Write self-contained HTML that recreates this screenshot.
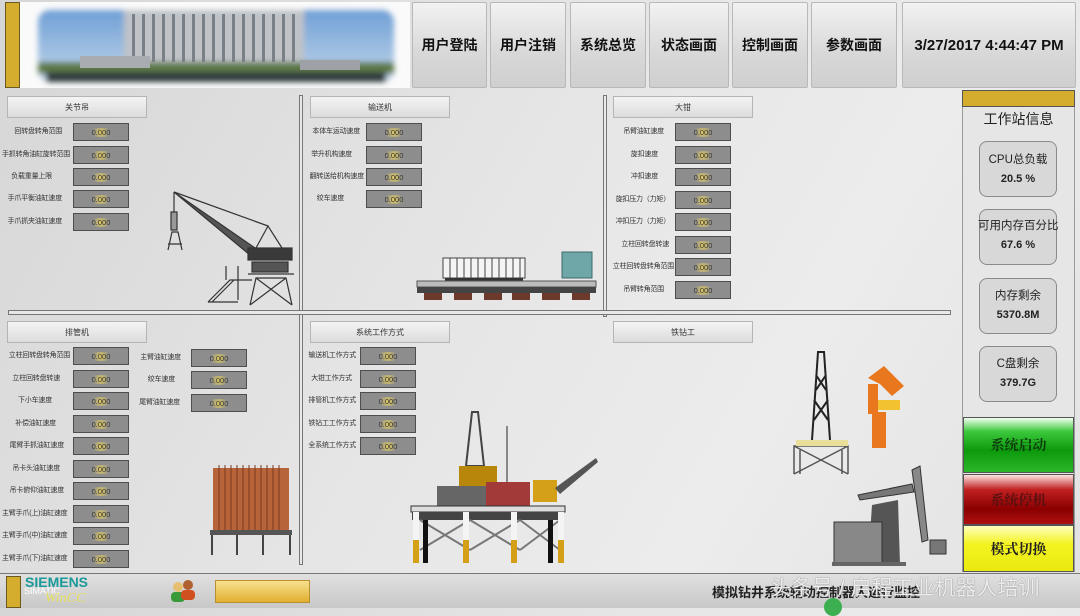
<!DOCTYPE html>
<html><head><meta charset="utf-8">
<style>
*{margin:0;padding:0;box-sizing:border-box}
body{width:1080px;height:608px;overflow:hidden;position:relative;background:linear-gradient(120deg,#d6d6d6 0%,#e6e6e6 45%,#ececec 70%,#e2e2e2 100%);font-family:"Liberation Sans","Noto Sans CJK SC",sans-serif;color:#222}
.a{position:absolute}
.nav{position:absolute;top:2px;height:86px;background:linear-gradient(#f2f2f2,#d8d8d8 60%,#cfcfcf);border:1px solid #b8b8b8;border-radius:2px;font-size:14px;font-weight:bold;display:flex;align-items:center;justify-content:center;color:#111;font-family:"Liberation Sans","Noto Sans CJK SC",sans-serif}
.tb{position:absolute;height:22px;width:140px;background:linear-gradient(#f4f4f4,#dcdcdc);border:1px solid #b5b5b5;font-size:8px;display:flex;align-items:center;justify-content:center;color:#333}
.lb{position:absolute;font-size:7px;color:#333;text-align:right;white-space:nowrap;line-height:18px;height:18px;letter-spacing:-0.2px}
.bx{position:absolute;width:56px;height:18px;background:#8d8d8d;border:1px solid #4e4e4e;font-size:7.5px;color:#333;display:flex;align-items:center;justify-content:center}
.bx i{font-style:normal;background:radial-gradient(circle,#e6cf60 0%,rgba(230,207,96,0) 65%);padding:0 3px}
.card{position:absolute;left:979px;width:78px;height:56px;background:#d8d8d8;border:1px solid #8a8a8a;border-radius:8px;text-align:center;font-size:11.5px;color:#222}
.card b{display:block;font-size:11px;margin-top:6px}
.btn{position:absolute;left:963px;width:111px;font-size:14px;font-weight:bold;display:flex;align-items:center;justify-content:center;font-family:"Noto Serif CJK SC","Liberation Serif",serif;border:1px solid #555}
</style></head><body>

<div class="a" style="left:5px;top:2px;width:15px;height:86px;background:#d4ac2e;border:1px solid #6a5a20"></div>
<div class="a" style="left:20px;top:2px;width:390px;height:86px;background:#fafafa;overflow:hidden">
 <svg width="390" height="86">
  <defs><linearGradient id="sky" x1="0" y1="0" x2="0" y2="1"><stop offset="0" stop-color="#6f9fd6"/><stop offset="1" stop-color="#c3d7ea"/></linearGradient>
  <filter id="bl"><feGaussianBlur stdDeviation="3"/></filter></defs>
  <g filter="url(#bl)">
  <rect x="18" y="8" width="356" height="72" rx="12" fill="url(#sky)"/>
  <rect x="104" y="8" width="180" height="58" fill="#bfc3c8"/>
  <rect x="18" y="60" width="356" height="12" fill="#5f7a48"/>
  <rect x="26" y="70" width="340" height="10" fill="#2f3a3c"/>
  </g>
  <g fill="#7a8088"><rect x="112" y="12" width="3" height="48"/><rect x="122" y="12" width="3" height="48"/><rect x="132" y="12" width="3" height="48"/><rect x="142" y="12" width="3" height="48"/><rect x="152" y="12" width="3" height="48"/><rect x="162" y="12" width="3" height="48"/><rect x="172" y="12" width="3" height="48"/><rect x="182" y="12" width="3" height="48"/><rect x="192" y="12" width="3" height="48"/><rect x="202" y="12" width="3" height="48"/><rect x="212" y="12" width="3" height="48"/><rect x="222" y="12" width="3" height="48"/><rect x="232" y="12" width="3" height="48"/><rect x="242" y="12" width="3" height="48"/><rect x="252" y="12" width="3" height="48"/><rect x="262" y="12" width="3" height="48"/><rect x="272" y="12" width="3" height="48"/></g>
  <rect x="60" y="54" width="70" height="12" fill="#a9acb0"/>
  <rect x="280" y="58" width="60" height="10" fill="#9ea2a6"/>
 </svg>
</div>
<div class="nav" style="left:412px;width:75px">用户登陆</div>
<div class="nav" style="left:490px;width:76px">用户注销</div>
<div class="nav" style="left:570px;width:76px">系统总览</div>
<div class="nav" style="left:649px;width:80px">状态画面</div>
<div class="nav" style="left:732px;width:76px">控制画面</div>
<div class="nav" style="left:811px;width:86px">参数画面</div>
<div class="nav" style="left:902px;width:174px;font-size:15px">3/27/2017 4:44:47 PM</div>

<div class="a" style="left:299px;top:95px;width:4px;height:470px;background:#e8e8e8;border:1px solid #777"></div>
<div class="a" style="left:603px;top:95px;width:4px;height:222px;background:#e8e8e8;border:1px solid #777"></div>
<div class="a" style="left:8px;top:310px;width:943px;height:5px;background:#e8e8e8;border:1px solid #777"></div>

<div class="tb" style="left:7px;top:96px">关节吊</div>
<div class="tb" style="left:310px;top:96px">输送机</div>
<div class="tb" style="left:613px;top:96px">大钳</div>
<div class="tb" style="left:7px;top:321px">排管机</div>
<div class="tb" style="left:310px;top:321px">系统工作方式</div>
<div class="tb" style="left:613px;top:321px">铁钻工</div>

<div class="lb" style="left:2px;width:60px;top:123px">回转盘转角范围</div><div class="bx" style="left:73px;top:123px"><i>0.000</i></div>
<div class="lb" style="left:2px;width:70px;top:146px;text-align:left;overflow:hidden">手抓转角油缸旋转范围</div><div class="bx" style="left:73px;top:146px"><i>0.000</i></div>
<div class="lb" style="left:2px;width:50px;top:168px">负载重量上限</div><div class="bx" style="left:73px;top:168px"><i>0.000</i></div>
<div class="lb" style="left:2px;width:60px;top:190px">手爪平衡油缸速度</div><div class="bx" style="left:73px;top:190px"><i>0.000</i></div>
<div class="lb" style="left:2px;width:60px;top:213px">手爪抓夹油缸速度</div><div class="bx" style="left:73px;top:213px"><i>0.000</i></div>

<div class="lb" style="left:306px;width:54px;top:123px">本体车运动速度</div><div class="bx" style="left:366px;top:123px"><i>0.000</i></div>
<div class="lb" style="left:306px;width:46px;top:146px">举升机构速度</div><div class="bx" style="left:366px;top:146px"><i>0.000</i></div>
<div class="lb" style="left:306px;width:58px;top:168px">翻转送给机构速度</div><div class="bx" style="left:366px;top:168px"><i>0.000</i></div>
<div class="lb" style="left:306px;width:38px;top:190px">绞车速度</div><div class="bx" style="left:366px;top:190px"><i>0.000</i></div>

<div class="lb" style="left:612px;width:52px;top:123px">吊臂油缸速度</div><div class="bx" style="left:675px;top:123px"><i>0.000</i></div>
<div class="lb" style="left:612px;width:46px;top:146px">旋扣速度</div><div class="bx" style="left:675px;top:146px"><i>0.000</i></div>
<div class="lb" style="left:612px;width:46px;top:168px">冲扣速度</div><div class="bx" style="left:675px;top:168px"><i>0.000</i></div>
<div class="lb" style="left:612px;width:58px;top:191px">旋扣压力（力矩）</div><div class="bx" style="left:675px;top:191px"><i>0.000</i></div>
<div class="lb" style="left:612px;width:58px;top:213px">冲扣压力（力矩）</div><div class="bx" style="left:675px;top:213px"><i>0.000</i></div>
<div class="lb" style="left:612px;width:57px;top:236px">立柱回转盘转速</div><div class="bx" style="left:675px;top:236px"><i>0.000</i></div>
<div class="lb" style="left:612px;width:62px;top:258px">立柱回转盘转角范围</div><div class="bx" style="left:675px;top:258px"><i>0.000</i></div>
<div class="lb" style="left:612px;width:52px;top:281px">吊臂转角范围</div><div class="bx" style="left:675px;top:281px"><i>0.000</i></div>

<div class="lb" style="left:2px;width:68px;top:347px">立柱回转盘转角范围</div><div class="bx" style="left:73px;top:347px"><i>0.000</i></div>
<div class="lb" style="left:2px;width:58px;top:370px">立柱回转盘转速</div><div class="bx" style="left:73px;top:370px"><i>0.000</i></div>
<div class="lb" style="left:2px;width:50px;top:392px">下小车速度</div><div class="bx" style="left:73px;top:392px"><i>0.000</i></div>
<div class="lb" style="left:2px;width:54px;top:415px">补偿油缸速度</div><div class="bx" style="left:73px;top:415px"><i>0.000</i></div>
<div class="lb" style="left:2px;width:62px;top:437px">尾臂手抓油缸速度</div><div class="bx" style="left:73px;top:437px"><i>0.000</i></div>
<div class="lb" style="left:2px;width:58px;top:460px">吊卡头油缸速度</div><div class="bx" style="left:73px;top:460px"><i>0.000</i></div>
<div class="lb" style="left:2px;width:62px;top:482px">吊卡俯仰油缸速度</div><div class="bx" style="left:73px;top:482px"><i>0.000</i></div>
<div class="lb" style="left:2px;width:71px;top:505px;text-align:left;overflow:hidden">主臂手爪(上)油缸速度</div><div class="bx" style="left:73px;top:505px"><i>0.000</i></div>
<div class="lb" style="left:2px;width:71px;top:527px;text-align:left;overflow:hidden">主臂手爪(中)油缸速度</div><div class="bx" style="left:73px;top:527px"><i>0.000</i></div>
<div class="lb" style="left:2px;width:71px;top:550px;text-align:left;overflow:hidden">主臂手爪(下)油缸速度</div><div class="bx" style="left:73px;top:550px"><i>0.000</i></div>
<div class="lb" style="left:135px;width:46px;top:349px">主臂油缸速度</div><div class="bx" style="left:191px;top:349px"><i>0.000</i></div>
<div class="lb" style="left:135px;width:40px;top:371px">绞车速度</div><div class="bx" style="left:191px;top:371px"><i>0.000</i></div>
<div class="lb" style="left:135px;width:45px;top:394px">尾臂油缸速度</div><div class="bx" style="left:191px;top:394px"><i>0.000</i></div>

<div class="lb" style="left:306px;width:50px;top:347px">输送机工作方式</div><div class="bx" style="left:360px;top:347px"><i>0.000</i></div>
<div class="lb" style="left:306px;width:46px;top:370px">大钳工作方式</div><div class="bx" style="left:360px;top:370px"><i>0.000</i></div>
<div class="lb" style="left:306px;width:50px;top:392px">排管机工作方式</div><div class="bx" style="left:360px;top:392px"><i>0.000</i></div>
<div class="lb" style="left:306px;width:50px;top:415px">铁钻工工作方式</div><div class="bx" style="left:360px;top:415px"><i>0.000</i></div>
<div class="lb" style="left:306px;width:50px;top:437px">全系统工作方式</div><div class="bx" style="left:360px;top:437px"><i>0.000</i></div>

<svg class="a" style="left:0;top:0" width="960" height="572">
 <g stroke="#333" fill="none" stroke-width="1.2">
  <line x1="174" y1="192" x2="268" y2="226"/>
  <path d="M174 192 L250 255 L258 250 Z" fill="#555"/>
  <line x1="174" y1="192" x2="174" y2="212"/>
  <rect x="171" y="212" width="6" height="18" fill="#999"/>
  <path d="M168 250 L172 232 L178 232 L182 250 M168 244 H182"/>
  <path d="M256 248 L268 226 L282 248"/>
  <rect x="248" y="248" width="44" height="12" fill="#3a3a3a"/>
  <rect x="252" y="262" width="36" height="10" fill="#555"/>
  <path d="M250 305 L256 278 H286 L292 305 M256 278 L292 305 M286 278 L250 305 M248 274 H294"/>
  <path d="M208 302 L230 280 H252 M212 302 L234 280 M208 302 H238 M226 266 V280 M238 266 V300"/>
 </g>
 <g>
  <rect x="443" y="258" width="82" height="20" fill="#f4f4f4" stroke="#444"/>
  <g stroke="#444" stroke-width="1"><line x1="450" y1="258" x2="450" y2="278"/><line x1="457" y1="258" x2="457" y2="278"/><line x1="464" y1="258" x2="464" y2="278"/><line x1="471" y1="258" x2="471" y2="278"/><line x1="478" y1="258" x2="478" y2="278"/><line x1="485" y1="258" x2="485" y2="278"/><line x1="492" y1="258" x2="492" y2="278"/><line x1="499" y1="258" x2="499" y2="278"/><line x1="506" y1="258" x2="506" y2="278"/><line x1="513" y1="258" x2="513" y2="278"/><line x1="520" y1="258" x2="520" y2="278"/></g>
  <rect x="445" y="278" width="78" height="4" fill="#333"/>
  <rect x="562" y="252" width="30" height="26" fill="#6fa6a8" stroke="#3c6a6c"/>
  <rect x="417" y="281" width="179" height="6" fill="#bbb" stroke="#555"/>
  <rect x="417" y="287" width="179" height="6" fill="#444"/>
  <g fill="#6b3a2c"><rect x="424" y="293" width="18" height="7"/><rect x="454" y="293" width="18" height="7"/><rect x="484" y="293" width="18" height="7"/><rect x="512" y="293" width="18" height="7"/><rect x="542" y="293" width="18" height="7"/><rect x="572" y="293" width="18" height="7"/></g>
 </g>
 <g>
  <rect x="213" y="468" width="76" height="62" fill="#b8643a"/>
  <g stroke="#7a3a1e" stroke-width="1"><line x1="219" y1="465" x2="219" y2="530"/><line x1="225" y1="465" x2="225" y2="530"/><line x1="231" y1="465" x2="231" y2="530"/><line x1="237" y1="465" x2="237" y2="530"/><line x1="243" y1="465" x2="243" y2="530"/><line x1="249" y1="465" x2="249" y2="530"/><line x1="255" y1="465" x2="255" y2="530"/><line x1="261" y1="465" x2="261" y2="530"/><line x1="267" y1="465" x2="267" y2="530"/><line x1="273" y1="465" x2="273" y2="530"/><line x1="279" y1="465" x2="279" y2="530"/></g>
  <rect x="210" y="530" width="82" height="5" fill="#555"/>
  <g fill="#444"><rect x="211" y="535" width="2" height="20"/><rect x="236" y="535" width="2" height="20"/><rect x="262" y="535" width="2" height="20"/><rect x="289" y="535" width="2" height="20"/></g>
 </g>
 <g>
  <path d="M466 466 L472 412 H478 L484 466 Z" fill="none" stroke="#444" stroke-width="2"/>
  <rect x="506" y="426" width="2" height="60" fill="#888"/>
  <rect x="459" y="466" width="38" height="20" fill="#b8860b"/>
  <rect x="437" y="486" width="50" height="20" fill="#666"/>
  <rect x="486" y="482" width="44" height="24" fill="#a33a3a"/>
  <rect x="533" y="480" width="24" height="22" fill="#d4a017"/>
  <path d="M555 488 L596 458 L598 462 L560 494 Z" fill="#555"/>
  <rect x="411" y="506" width="154" height="6" fill="#ddd" stroke="#333"/>
  <rect x="412" y="512" width="152" height="8" fill="#444"/>
  <g stroke="#777" stroke-width="2"><path d="M420 520 L470 550 M470 520 L420 550 M470 520 L520 550 M520 520 L470 550 M520 520 L560 550 M560 520 L520 550"/></g>
  <g><rect x="413" y="512" width="6" height="40" fill="#f4f4f4"/><rect x="413" y="540" width="6" height="23" fill="#d4a017"/>
  <rect x="463" y="512" width="6" height="40" fill="#f4f4f4"/><rect x="463" y="540" width="6" height="23" fill="#d4a017"/>
  <rect x="511" y="512" width="6" height="40" fill="#f4f4f4"/><rect x="511" y="540" width="6" height="23" fill="#d4a017"/>
  <rect x="558" y="512" width="6" height="40" fill="#f4f4f4"/><rect x="558" y="540" width="6" height="23" fill="#d4a017"/>
  <rect x="423" y="520" width="5" height="43" fill="#111"/><rect x="548" y="520" width="5" height="43" fill="#111"/></g>
 </g>
 <g stroke="#222" fill="none" stroke-width="2">
  <path d="M812 440 L818 352 H824 L830 440 M814 420 L828 400 M828 420 L814 400 M816 390 L826 375 M826 390 L816 375"/>
  <path d="M794 474 V446 H848 V474 M800 474 V450 M842 474 V450 M794 446 L848 474 M848 446 L794 474" stroke="#555" stroke-width="1.5"/>
 </g>
 <rect x="796" y="440" width="52" height="6" fill="#eadf9a"/>
 <g fill="#e8771e">
  <rect x="872" y="412" width="14" height="36"/>
  <rect x="878" y="400" width="22" height="10" fill="#f2c230"/>
  <path d="M868 378 L884 366 L904 386 L892 396 L880 384 Z"/>
  <rect x="868" y="384" width="10" height="30"/>
 </g>
 <g>
  <path d="M858 495 L912 484 L914 492 L860 500 Z" fill="#777" stroke="#333"/>
  <path d="M912 470 L920 466 L928 540 L922 542 Z" fill="#888" stroke="#333"/>
  <path d="M872 505 L898 500 L900 565 L868 565 Z" fill="#555"/>
  <rect x="834" y="522" width="48" height="43" fill="#888" stroke="#333"/>
  <rect x="832" y="562" width="74" height="4" fill="#666"/>
  <rect x="930" y="540" width="16" height="14" fill="#777" stroke="#333"/>
 </g>
</svg>

<div class="a" style="left:962px;top:90px;width:113px;height:482px;background:#e6e6e6;border-left:1px solid #999;border-right:1px solid #999"></div>
<div class="a" style="left:962px;top:90px;width:113px;height:17px;background:#d4ac2e;border:1px solid #555"></div>
<div class="a" style="left:962px;top:109px;width:113px;text-align:center;font-size:14px;color:#222">工作站信息</div>
<div class="card" style="top:141px"><div style="margin-top:9px">CPU总负载</div><b>20.5 %</b></div>
<div class="card" style="top:209px"><div style="margin-top:7px;margin-left:-2px;white-space:nowrap">可用内存百分比</div><b>67.6 %</b></div>
<div class="card" style="top:278px"><div style="margin-top:8px">内存剩余</div><b>5370.8M</b></div>
<div class="card" style="top:346px"><div style="margin-top:8px">C盘剩余</div><b>379.7G</b></div>
<div class="btn" style="top:417px;height:56px;background:linear-gradient(#f0fff0 0%,#3cc83c 25%,#0c9a0c 60%,#2ab82a 100%);color:#0d3a0d">系统启动</div>
<div class="btn" style="top:474px;height:51px;background:linear-gradient(#fbe2e2 0%,#c02020 30%,#8a0000 70%,#b01010 100%);color:#5a1010">系统停机</div>
<div class="btn" style="top:525px;height:47px;background:linear-gradient(#ffffc0,#f3f320 40%,#eaea10);color:#222">模式切换</div>

<div class="a" style="left:0;top:573px;width:1080px;height:35px;background:linear-gradient(#e0e0e0,#c8c8c8);border-top:1px solid #777"></div>
<div class="a" style="left:6px;top:576px;width:15px;height:32px;background:#d4ac2e;border:1px solid #6a5a20"></div>
<div class="a" style="left:25px;top:574px;font-size:14px;font-weight:bold;color:#1a9a9a;font-family:'Liberation Sans',sans-serif">SIEMENS</div>
<div class="a" style="left:24px;top:586px;font-size:9px;color:#fff">SIMATIC</div>
<div class="a" style="left:45px;top:591px;font-size:14px;font-style:italic;color:#e9e060;font-family:'Liberation Serif',serif">WinCC</div>
<svg class="a" style="left:168px;top:578px" width="32" height="26"><circle cx="10" cy="9" r="5" fill="#e6c070"/><rect x="3" y="14" width="14" height="10" rx="4" fill="#3a9a3a"/><circle cx="20" cy="7" r="5" fill="#b06030"/><rect x="13" y="12" width="14" height="10" rx="4" fill="#d05020"/></svg>
<div class="a" style="left:215px;top:580px;width:95px;height:23px;background:linear-gradient(#f8e090,#e0b030);border:1px solid #b89030"></div>
<div class="a" style="left:712px;top:582px;font-size:13px;font-weight:bold;color:#222;white-space:nowrap">模拟钻井系统辅助控制器人运行监控</div>
<div class="a" style="left:770px;top:572px;font-size:21px;color:rgba(255,255,255,0.88);white-space:nowrap;text-shadow:0 0 1px #555">头条号 / 启程工业机器人培训</div>
<div class="a" style="left:824px;top:598px;width:18px;height:18px;border-radius:50%;background:#3cb050"></div>
</body></html>
